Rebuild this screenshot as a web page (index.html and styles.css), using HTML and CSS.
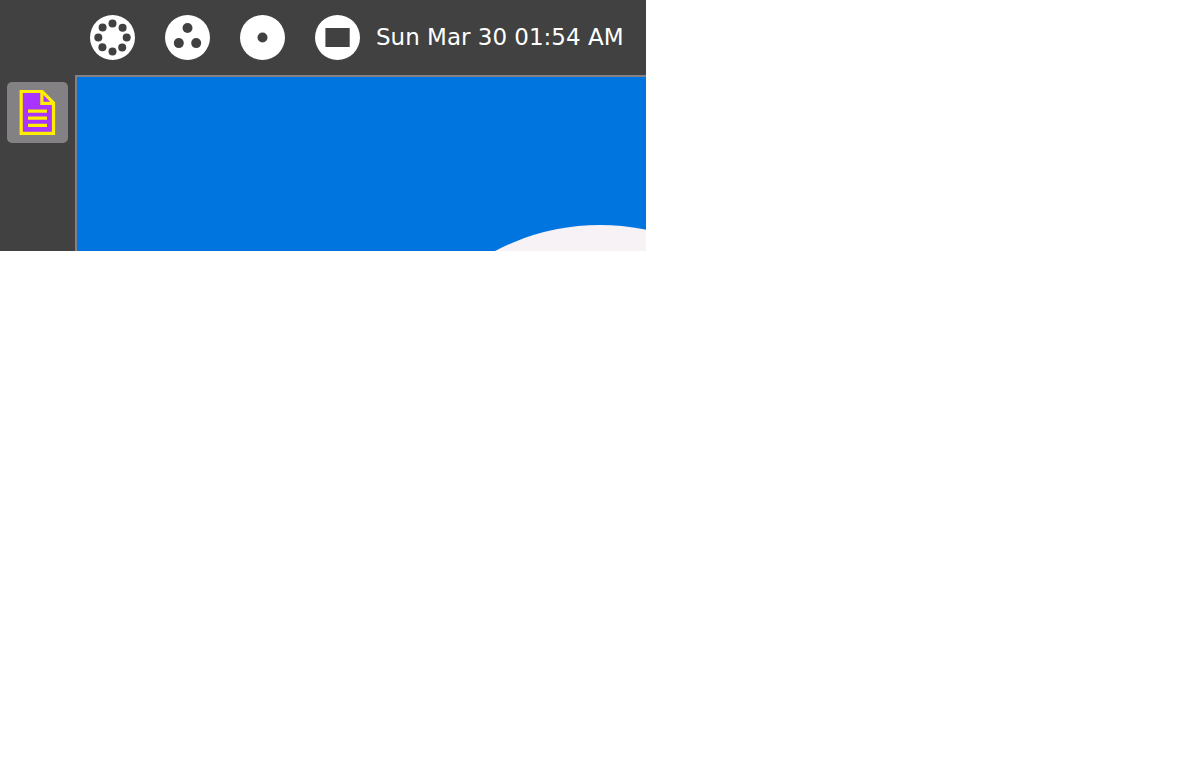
FILE: index.html
```html
<!DOCTYPE html>
<html lang="en">
<head>
<meta charset="utf-8">
<title>Desktop</title>
<link rel="stylesheet" href="styles.css">
</head>
<body>
<div class="desktop">
  <header class="panel">
    <nav class="activities" aria-label="Activities">
      <button class="activity" type="button" aria-label="Neighborhood">
        <svg viewBox="0 0 45 45"><circle class="disc" cx="22.5" cy="22.5" r="22.5"/><g class="mark"><circle cx="22.5" cy="8.4" r="4"/><circle cx="32.6" cy="12.7" r="4"/><circle cx="36.7" cy="22.5" r="4"/><circle cx="32.2" cy="32.5" r="4"/><circle cx="22.5" cy="36.6" r="4"/><circle cx="12.4" cy="32.3" r="4"/><circle cx="8.3" cy="22.5" r="4"/><circle cx="12.6" cy="12.5" r="4"/></g></svg>
      </button>
      <button class="activity" type="button" aria-label="Group">
        <svg viewBox="0 0 45 45"><circle class="disc" cx="22.5" cy="22.5" r="22.5"/><g class="mark"><circle cx="22.5" cy="13" r="5"/><circle cx="13.8" cy="28.1" r="5"/><circle cx="31.2" cy="28.1" r="5"/></g></svg>
      </button>
      <button class="activity" type="button" aria-label="Home">
        <svg viewBox="0 0 45 45"><circle class="disc" cx="22.5" cy="22.5" r="22.5"/><circle class="mark" cx="22.5" cy="22.5" r="5"/></svg>
      </button>
      <button class="activity" type="button" aria-label="Activity">
        <svg viewBox="0 0 45 45"><circle class="disc" cx="22.5" cy="22.5" r="22.5"/><path class="mark" d="M10.4 13h24.3v19H10.4z"/></svg>
      </button>
    </nav>
    <time class="clock">Sun Mar 30 01:54 AM</time>
  </header>
  <div class="workspace">
    <aside class="dock">
      <button class="launcher" type="button" aria-label="Document">
        <svg viewBox="0 0 61 61"><path class="page" d="M14.200 9.500h21l11.300 11.300v30.500H14.200z"/><path class="line" d="M34.900 9.500v11.800h11.600M21 29.200h19M21 36.200h19M21 43.300h19"/></svg>
      </button>
    </aside>
    <main class="wallpaper">
      <svg viewBox="0 0 569 174" preserveAspectRatio="xMidYMid slice" aria-hidden="true"><circle class="hill" cx="523" cy="373" r="225"/></svg>
    </main>
  </div>
</div>
</body>
</html>
```
FILE: styles.css
```css
* {
  box-sizing: border-box;
}

body {
  margin: 0;
  background: #fff;
}

button {
  display: block;
  padding: 0;
  border: 0;
  background: none;
}

svg {
  display: block;
  width: 100%;
}

.desktop {
  max-width: 646px;
  background: #414141;
}

.panel {
  display: flex;
  align-items: flex-start;
  gap: 16px;
  padding: 15px 15px 15px 90px;
}

.activities {
  display: flex;
  gap: 30px;
}

.activity {
  width: 45px;
}

.disc {
  fill: #fff;
}

.mark {
  fill: #414141;
}

.clock {
  color: #fff;
  font-family: "DejaVu Sans", sans-serif;
  font-size: 23px;
  line-height: 45px;
  white-space: nowrap;
}

.workspace {
  display: flex;
}

.dock {
  flex: none;
  width: 75px;
  padding: 7px;
}

.launcher {
  width: 61px;
  border-radius: 5px;
  background: #838184;
}

.page,
.line {
  fill: #a933ff;
  stroke: #fe0;
  stroke-width: 3.2;
}

.line {
  fill: none;
}

.wallpaper {
  flex: 1;
  border-top: 2px solid #838184;
  border-left: 2px solid #838184;
  background: #0074df;
}

.hill {
  fill: #f6f2f6;
}
```
